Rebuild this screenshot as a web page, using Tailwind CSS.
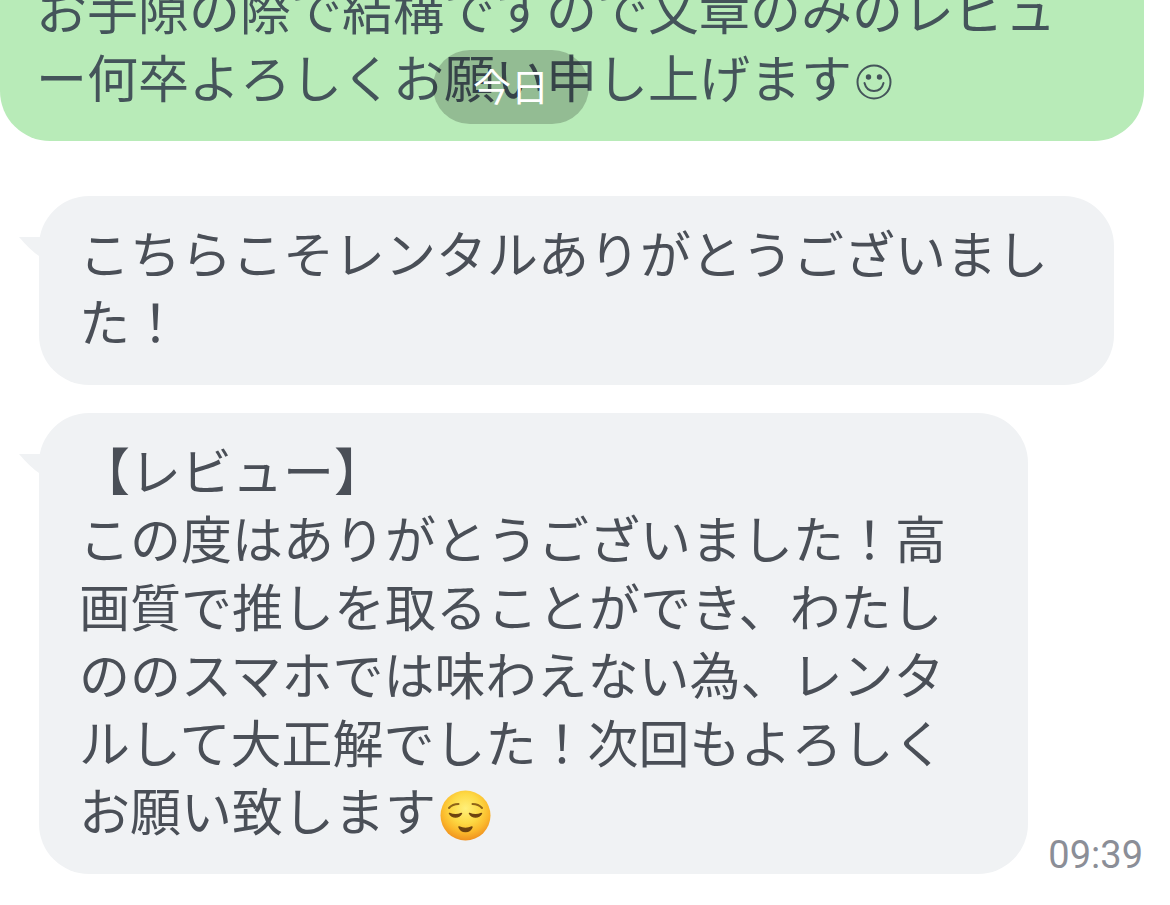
<!DOCTYPE html>
<html lang="ja">
  <head>
    <meta charset="UTF-8" />
    <meta name="viewport" content="width=device-width, initial-scale=1.0" />
    <title>トーク</title>
    <script src="https://cdn.jsdelivr.net/npm/@tailwindcss/browser@4"></script>
  </head>
  <body class="bg-white font-['Noto_Sans_CJK_JP',sans-serif] text-[51px] leading-[68px] text-[#4a4f57]">
    <main class="relative flex flex-col justify-end h-screen overflow-hidden pb-[31px]">
      <!-- Sent message -->
      <div class="shrink-0 mr-[26px] mb-[55px] pl-9 pr-10 pt-[22px] pb-[31px] rounded-[50px] bg-[#b8ebb8] text-[#44545a]">
        <p class="whitespace-nowrap">
          お手隙の際で結構ですので文章のみのレビュ<br />ー何卒よろしくお願い申し上げます<svg class="inline-block size-[36px] ml-1 align-[-2px]" viewBox="0 0 36 36" role="img" aria-label="☺">
            <circle cx="18" cy="18" r="16.5" fill="none" stroke="currentColor" stroke-width="2" />
            <circle cx="12.5" cy="13" r="2.7" fill="currentColor" />
            <circle cx="23.5" cy="13" r="2.7" fill="currentColor" />
            <path d="M8.5 19c1.2 5 5 8 9.500 8s8.300-3 9.500-8" fill="none" stroke="currentColor" stroke-width="2" stroke-linecap="round" />
          </svg>
        </p>
      </div>

      <!-- Received messages -->
      <div class="shrink-0 relative ml-[39px] mr-[56px] mb-7 px-10 pt-[22px] pb-[31px] rounded-[50px] bg-[#f0f2f4]">
        <svg class="absolute -left-[20px] top-[41px] w-6 h-[19px]" viewBox="0 0 24 19" aria-hidden="true">
          <path d="M0 0h24v19h-4Q11 13 0 0z" fill="#f0f2f4" />
        </svg>
        <p class="whitespace-nowrap">こちらこそレンタルありがとうございまし<br />た！</p>
      </div>

      <div class="shrink-0 flex items-end gap-5 ml-[39px] mr-[27px]">
        <div class="relative flex-1 px-10 pt-[22px] pb-[31px] rounded-[50px] bg-[#f0f2f4]">
          <svg class="absolute -left-[20px] top-[41px] w-6 h-[19px]" viewBox="0 0 24 19" aria-hidden="true">
            <path d="M0 0h24v19h-4Q11 13 0 0z" fill="#f0f2f4" />
          </svg>
          <p class="whitespace-nowrap">
            【レビュー】<br />この度はありがとうございました！高<br />画質で推しを取ることができ、わたし<br />ののスマホでは味わえない為、レンタ<br />ルして大正解でした！次回もよろしく<br />お願い致します<svg class="inline-block size-[51px] ml-1 align-[-10px]" viewBox="0 0 51 51" role="img" aria-label="😌">
              <defs>
                <radialGradient id="face" cx="50%" cy="36%" r="66%">
                  <stop offset="0" stop-color="#fff07a" />
                  <stop offset=".45" stop-color="#fdd944" />
                  <stop offset=".72" stop-color="#fbb92c" />
                  <stop offset="1" stop-color="#ee8c1e" />
                </radialGradient>
              </defs>
              <circle cx="25.5" cy="25.5" r="25" fill="url(#face)" />
              <g fill="none" stroke-linecap="round">
                <path d="M9 18Q12.500 14 18.500 14M32.500 14Q38.500 14 42 18" stroke="#8f6418" stroke-width="2" />
              </g>
              <g fill="#6e4310" stroke="#6e4310" stroke-width="1.500" stroke-linejoin="round">
                <path d="M9.500 23.500q6 2.500 12 0-2 3.500-6 3.500t-6-3.500zM29.500 23.500q6 2.500 12 0-2 3.500-6 3.500t-6-3.500z" />
                <path d="M19 37q6.500 3 13 0-1.500 4.500-6.500 4.500T19 37z" />
              </g>
            </svg>
          </p>
        </div>
        <time datetime="09:39" class="font-[Roboto,sans-serif] text-[38px] leading-[38px] text-[#8b8e97]">09:39</time>
      </div>

      <!-- Floating date label -->
      <div class="absolute top-[50px] left-[37%] px-10 pt-[9px] pb-[13px] rounded-full bg-black/20 text-white text-[38px] leading-[52px]">今日</div>
    </main>
  </body>
</html>
